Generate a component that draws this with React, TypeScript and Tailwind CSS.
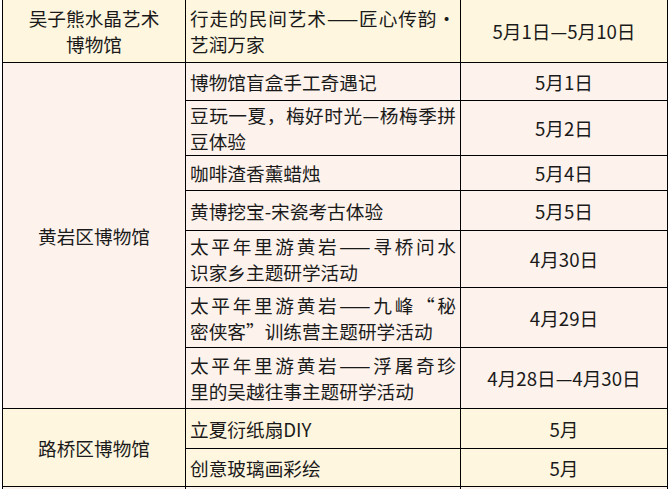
import React from 'react';

interface Activity {
  lines: string[];
  date: string;
  rowClass: string;
}

interface Museum {
  name: string[];
  tone: 'yellow' | 'pink';
  activities: Activity[];
}

const museums: Museum[] = [
  {
    name: ['吴子熊水晶艺术', '博物馆'],
    tone: 'yellow',
    activities: [
      { lines: ['行走的民间艺术——匠心传韵·', '艺润万家'], date: '5月1日—5月10日', rowClass: 'h-[63px]' },
    ],
  },
  {
    name: ['黄岩区博物馆'],
    tone: 'pink',
    activities: [
      { lines: ['博物馆盲盒手工奇遇记'], date: '5月1日', rowClass: 'h-[38px]' },
      { lines: ['豆玩一夏，梅好时光—杨梅季拼', '豆体验'], date: '5月2日', rowClass: 'h-[55px]' },
      { lines: ['咖啡渣香薰蜡烛'], date: '5月4日', rowClass: 'h-[35px]' },
      { lines: ['黄博挖宝-宋瓷考古体验'], date: '5月5日', rowClass: 'h-[40px]' },
      { lines: ['太平年里游黄岩——寻桥问水', '识家乡主题研学活动'], date: '4月30日', rowClass: 'h-[57px]' },
      { lines: ['太平年里游黄岩——九峰“秘', '密侠客”训练营主题研学活动'], date: '4月29日', rowClass: 'h-[60px]' },
      { lines: ['太平年里游黄岩——浮屠奇珍', '里的吴越往事主题研学活动'], date: '4月28日—4月30日', rowClass: 'h-[61px]' },
    ],
  },
  {
    name: ['路桥区博物馆'],
    tone: 'yellow',
    activities: [
      { lines: ['立夏衍纸扇DIY'], date: '5月', rowClass: 'h-[40px]' },
      { lines: ['创意玻璃画彩绘'], date: '5月', rowClass: 'h-[38px]' },
    ],
  },
  {
    name: [''],
    tone: 'pink',
    activities: [{ lines: [''], date: '', rowClass: 'h-[40px]' }],
  },
];

const toneBg = {
  yellow: 'bg-[#fff6df]',
  pink: 'bg-[#fdf2ec]',
};

function ActivityText({ lines }: { lines: string[] }) {
  return (
    <div className="w-full">
      {lines.map((line, i) => (
        <div
          key={i}
          className={i < lines.length - 1 ? 'text-justify [text-align-last:justify]' : 'text-left'}
        >
          {line}
        </div>
      ))}
    </div>
  );
}

export default function App() {
  return (
    <div
      className="w-[670px] h-[489px] overflow-hidden bg-white text-[18.67px] leading-[26px] text-[#1a1a1a]"
      style={{ fontFamily: '"Noto Sans CJK SC", "Noto Sans", sans-serif' }}
    >
      <div className="ml-[2px] w-[666px] border-l border-black">
        {museums.map((m, mi) => (
          <div key={mi} className={`flex ${toneBg[m.tone]}`}>
            <div className="w-[183px] shrink-0 flex flex-col items-center justify-center text-center border-r border-b border-black">
              {m.name.map((n, i) => (
                <div key={i}>{n}</div>
              ))}
            </div>
            <div className="flex flex-col">
              {m.activities.map((a, ai) => (
                <div key={ai} className={`flex ${a.rowClass}`}>
                  <div className="w-[275px] shrink-0 flex items-center px-[4px] border-r border-b border-black">
                    <ActivityText lines={a.lines} />
                  </div>
                  <div className="w-[207px] shrink-0 flex items-center justify-center border-r border-b border-black">
                    {a.date}
                  </div>
                </div>
              ))}
            </div>
          </div>
        ))}
      </div>
    </div>
  );
}
